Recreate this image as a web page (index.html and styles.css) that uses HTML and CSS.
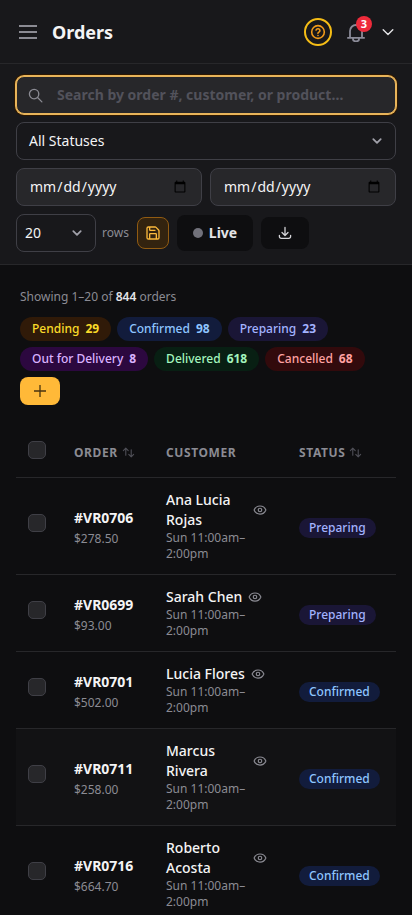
FILE: index.html
```html
<!DOCTYPE html>
<html lang="en">
<head>
<meta charset="utf-8">
<meta name="viewport" content="width=device-width, initial-scale=1">
<title>Orders</title>
<link rel="stylesheet" href="styles.css">
</head>
<body>
<svg class="defs" width="0" height="0" aria-hidden="true">
  <symbol id="eye" viewBox="0 0 24 24"><path d="M2.1 12.4a1 1 0 0 1 0-.7 10.75 10.75 0 0 1 19.8 0 1 1 0 0 1 0 .7 10.75 10.75 0 0 1-19.8 0"/><circle cx="12" cy="12" r="3"/></symbol>
  <symbol id="sort" viewBox="0 0 24 24"><path d="M7 17V4M2.500 8.500 7 4l4.500 4.500M17 7v13M12.500 15.500 17 20l4.500-4.500"/></symbol>
</svg>
<header class="topbar">
  <svg class="menu" viewBox="0 0 18 14"><path d="M0 1h18M0 7h18M0 13h18"/></svg>
  <h1>Orders</h1>
  <span class="help"><svg viewBox="0 0 24 24"><circle cx="12" cy="12" r="9.500"/><path d="M9.100 9a3 3 0 0 1 5.800 1c0 2-3 2.500-3 4M12 17.200v.1"/></svg></span>
  <span class="bell"><svg viewBox="0 0 20 20"><path d="M4 15.500V9a6 6 0 0 1 12 0V15.500M1.200 15.800h17.600M6.800 16.200a3.200 3.200 0 0 0 6.400 0"/></svg><b class="badge">3</b></span>
  <svg class="account" viewBox="0 0 16 16"><path d="m3.200 5.800 4.800 4.700 4.800-4.700"/></svg>
</header>
<section class="filters">
  <div class="search">
    <svg viewBox="0 0 16 16"><circle cx="6.500" cy="6.500" r="5"/><path d="m10.200 10.200 4.600 4.600"/></svg>
    <span>Search by order #, customer, or product…</span>
  </div>
  <div class="select"><span>All Statuses</span><svg viewBox="0 0 16 16"><path d="m4.300 6.200 3.700 3.600 3.700-3.600"/></svg></div>
  <div class="dates">
    <input type="date" aria-label="From">
    <input type="date" aria-label="To">
  </div>
  <div class="tools">
    <div class="select count"><span>20</span><svg viewBox="0 0 16 16"><path d="m4.300 6.200 3.700 3.600 3.700-3.600"/></svg></div>
    <span class="rows">rows</span>
    <button class="save" aria-label="Save"><svg viewBox="0 0 24 24"><path d="M15.200 3a2 2 0 0 1 1.400.6l3.800 3.800a2 2 0 0 1 .6 1.400V19a2 2 0 0 1-2 2H5a2 2 0 0 1-2-2V5a2 2 0 0 1 2-2zM17 21v-7a1 1 0 0 0-1-1H8a1 1 0 0 0-1 1v7M7 3v4a1 1 0 0 0 1 1h7"/></svg></button>
    <button class="live"><i></i>Live</button>
    <button class="download" aria-label="Download"><svg viewBox="0 0 14 14"><path d="M7 1.500v7.700M4 6.500l3 3 3-3M1.400 9.300v1.200a1.800 1.800 0 0 0 1.800 1.800h7.600a1.800 1.800 0 0 0 1.800-1.800V9.300"/></svg></button>
  </div>
</section>
<main>
  <p class="summary">Showing 1–20 of <b>844</b> orders</p>
  <div class="chips">
    <span class="chip pending">Pending <b>29</b></span>
    <span class="chip confirmed">Confirmed <b>98</b></span>
    <span class="chip preparing">Preparing <b>23</b></span>
    <span class="chip out">Out for Delivery <b>8</b></span>
    <span class="chip delivered">Delivered <b>618</b></span>
    <span class="chip cancelled">Cancelled <b>68</b></span>
    <button class="add" aria-label="Add"><svg viewBox="0 0 12 12"><path d="M6 0v12M0 6h12"/></svg></button>
  </div>
  <table>
    <thead>
      <tr><th class="c-check"><i class="check"></i></th><th class="c-order">ORDER<svg><use href="#sort"/></svg></th><th class="c-customer">CUSTOMER</th><th class="c-status">STATUS<svg><use href="#sort"/></svg></th></tr>
    </thead>
    <tbody>
      <tr><td><i class="check"></i></td><td><div class="num">#VR0706</div><div class="price">$278.50</div></td><td><div class="who"><span>Ana Lucia Rojas</span><svg><use href="#eye"/></svg></div><div class="slot">Sun 11:00am–2:00pm</div></td><td class="c-status"><span class="pill preparing">Preparing</span></td></tr>
      <tr><td><i class="check"></i></td><td><div class="num">#VR0699</div><div class="price">$93.00</div></td><td><div class="who"><span>Sarah Chen</span><svg><use href="#eye"/></svg></div><div class="slot">Sun 11:00am–2:00pm</div></td><td class="c-status"><span class="pill preparing">Preparing</span></td></tr>
      <tr><td><i class="check"></i></td><td><div class="num">#VR0701</div><div class="price">$502.00</div></td><td><div class="who"><span>Lucia Flores</span><svg><use href="#eye"/></svg></div><div class="slot">Sun 11:00am–2:00pm</div></td><td class="c-status"><span class="pill confirmed">Confirmed</span></td></tr>
      <tr class="hover"><td><i class="check"></i></td><td><div class="num">#VR0711</div><div class="price">$258.00</div></td><td><div class="who"><span>Marcus Rivera</span><svg><use href="#eye"/></svg></div><div class="slot">Sun 11:00am–2:00pm</div></td><td class="c-status"><span class="pill confirmed">Confirmed</span></td></tr>
      <tr><td><i class="check"></i></td><td><div class="num">#VR0716</div><div class="price">$664.70</div></td><td><div class="who"><span>Roberto Acosta</span><svg><use href="#eye"/></svg></div><div class="slot">Sun 11:00am–2:00pm</div></td><td class="c-status"><span class="pill confirmed">Confirmed</span></td></tr>
    </tbody>
  </table>
</main>
</body>
</html>
```
FILE: styles.css
```css
* { box-sizing: border-box; }
html, body { height: 100%; overflow: hidden; }
body { margin: 0; background: #0e0e10; color: #f4f4f5; font: 14px/20px "Noto Sans", sans-serif; }
svg { fill: none; stroke: currentColor; stroke-width: 2; stroke-linecap: round; stroke-linejoin: round; flex: none; display: block; }
.defs { position: absolute; }
button { border: 0; padding: 0; font: inherit; color: inherit; display: flex; align-items: center; justify-content: center; }

.topbar { height: 64px; padding: 0 16px 0 19px; display: flex; align-items: center; background: #18181b; border-bottom: 1px solid #27272a; }
.menu { width: 18px; height: 14px; color: #8b8b93; stroke-linecap: butt; }
h1 { margin: 0 auto 0 15px; font-size: 18px; line-height: 28px; font-weight: 700; }
.help { width: 28px; height: 28px; border: 2px solid #f5bd16; border-radius: 50%; display: flex; align-items: center; justify-content: center; color: #f09a1a; }
.help svg { width: 16px; height: 16px; stroke-width: 2.4; }
.bell { position: relative; margin: 0 14px 0 14px; color: #8b8b98; }
.bell svg { width: 20px; height: 20px; stroke-width: 1.8; stroke-linecap: butt; }
.badge { position: absolute; left: 10px; top: -6px; width: 16px; height: 16px; border-radius: 50%; background: #ee2b3b; color: #fff; font-size: 11px; line-height: 16px; text-align: center; }
.account { width: 16px; height: 16px; color: #e4e4e7; stroke-width: 1.4; }

.filters { height: 201px; padding: 12px 16px; display: flex; flex-direction: column; gap: 8px; background: #18181b; border-bottom: 1px solid #27272a; }
.search { height: 38px; border: 1px solid #e8b45a; border-radius: 8px; box-shadow: 0 0 0 1px #e8b45a, 0 0 0 2px #2e1800; background: #27272a; display: flex; align-items: center; gap: 14px; padding-left: 11px; color: #52525b; font-weight: 700; }
.search svg { width: 15px; height: 15px; color: #8b8b93; stroke-width: 1.4; }
.select { height: 38px; border: 1px solid #3f3f46; border-radius: 8px; display: flex; align-items: center; justify-content: space-between; padding: 0 10px 0 12px; }
.select svg { width: 16px; height: 16px; color: #a1a1aa; stroke-width: 1.8; }
.dates { display: grid; grid-template-columns: 1fr 1fr; gap: 8px; }
.dates input { width: 100%; height: 38px; margin: 0; padding: 8px 12px; border: 1px solid #3f3f46; border-radius: 8px; background: #27272a; color: #f4f4f5; font: inherit; }
.tools { display: flex; align-items: center; height: 38px; }
.count { width: 80px; padding-left: 8px; }
.rows { margin: 0 8px 0 6px; font-size: 12px; color: #8b8b93; width: 27px; }
.save { width: 32px; height: 32px; border: 1px solid #915b12; border-radius: 8px; background: #33230f; color: #fbb93c; }
.save svg { width: 16px; height: 16px; }
.live { width: 76px; height: 36px; margin: 0 8px; border-radius: 8px; background: #0e0e10; color: #e4e4e7; font-weight: 700; gap: 6px; }
.live i { width: 10px; height: 10px; border-radius: 50%; background: #71717a; }
.download { width: 48px; height: 32px; border-radius: 8px; background: #0e0e10; color: #d4d4d8; }
.download svg { width: 14px; height: 14px; stroke-width: 1.3; }

main { padding: 23px 16px 0; }
.summary { margin: 0 4px 12px; font-size: 12px; line-height: 17px; color: #8b8b93; }
.summary b { color: #e4e4e7; font-weight: 600; }
.chips { display: flex; flex-wrap: wrap; gap: 6px; margin: 0 4px; }
.chip { height: 24px; padding: 0 12px; border-radius: 12px; font-size: 12px; line-height: 24px; font-weight: 500; display: flex; gap: 6px; }
.chip b { font-weight: 700; }
.pending { background: #301a08; color: #fadb29; }
.confirmed { background: #121c3c; color: #8ec5ff; }
.preparing { background: #1a1636; color: #a3b3ff; }
.out { background: #2c083f; color: #dab2ff; }
.delivered { background: #081f13; color: #a3f5bd; }
.cancelled { background: #320a0c; color: #ffa2a2; }
.add { width: 40px; height: 28px; border-radius: 8px; background: #ffb938; color: #49330f; }
.add svg { width: 12px; height: 12px; stroke-width: 1.3; stroke-linecap: butt; }

table { width: 380px; margin-top: 20px; table-layout: fixed; border-collapse: separate; border-spacing: 0; }
th { height: 53px; padding: 3px 0 0 12px; text-align: left; font-size: 12px; font-weight: 700; letter-spacing: .6px; color: #8b8b93; border-bottom: 1px solid #27272a; white-space: nowrap; }
th svg { width: 13px; height: 13px; display: inline-block; vertical-align: -2px; margin-left: 4px; color: #505058; }
.c-check { width: 46px; }
.c-order { width: 92px; }
.c-customer { width: 125px; }
.c-status { padding-left: 20px; }
td { padding: 12px 0 12px 12px; border-bottom: 1px solid #27272a; vertical-align: middle; }
td.c-status { padding-left: 20px; }
.check { display: block; width: 18px; height: 18px; border: 1px solid #3f3f46; border-radius: 5px; background: #27272a; }
td .check { margin-top: -6px; }
th .check { margin-top: -5px; }
.num { padding-top: 3px; font-weight: 700; }
.price { margin-top: 3px; font-size: 12px; line-height: 16px; color: #8b8b93; }
.who { width: 101px; display: flex; align-items: center; gap: 6px; font-weight: 500; }
.who svg { width: 14px; height: 14px; color: #8b8b93; }
.slot { width: 101px; font-size: 12px; line-height: 16px; color: #8b8b93; }
.pill { display: block; width: fit-content; height: 20px; margin-top: 4px; padding: 0 10px; border-radius: 10px; font-size: 12px; font-weight: 500; }
.hover td { background: #121214; }
```
